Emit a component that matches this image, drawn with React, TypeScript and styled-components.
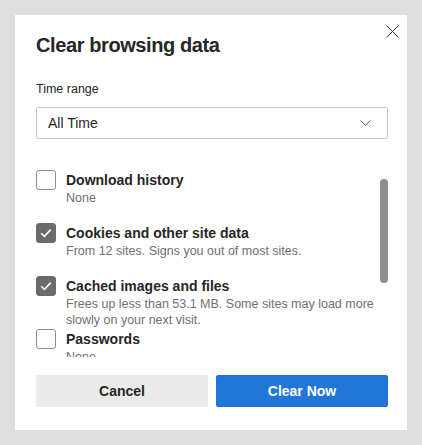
import React from "react";
import styled, { createGlobalStyle } from "styled-components";

const GlobalStyle = createGlobalStyle`
  html, body {
    margin: 0;
    padding: 0;
    background: #dedede;
  }
  body {
    font-family: "Liberation Sans", Arial, sans-serif;
    color: #262626;
  }
`;

const Page = styled.div`
  width: 422px;
  height: 445px;
  padding: 15px;
  box-sizing: border-box;
`;

const Dialog = styled.section`
  position: relative;
  width: 392px;
  height: 415px;
  box-sizing: border-box;
  background: #fff;
  padding: 18px 19px 23px 21px;
  display: flex;
  flex-direction: column;
`;

const CloseButton = styled.button`
  position: absolute;
  top: 6px;
  right: 5px;
  width: 20px;
  height: 20px;
  padding: 0;
  border: none;
  background: none;
  display: flex;
  align-items: center;
  justify-content: center;
  cursor: pointer;
`;

const Title = styled.h1`
  margin: 0;
  font-size: 20px;
  line-height: 24px;
  font-weight: 700;
  letter-spacing: -0.4px;
  color: #262626;
`;

const FieldLabel = styled.div`
  margin-top: 24px;
  font-size: 12.5px;
  line-height: 16px;
  color: #262626;
`;

const Select = styled.div`
  margin-top: 10px;
  height: 32px;
  box-sizing: border-box;
  border: 1px solid #c6c6c6;
  border-radius: 2px;
  display: flex;
  align-items: center;
  justify-content: space-between;
  padding: 0 16px 0 11px;
  font-size: 14px;
  color: #262626;
`;

const ListArea = styled.div`
  margin-top: 16px;
  height: 202px;
  display: flex;
  overflow: hidden;
`;

const List = styled.div`
  flex: 1;
  padding-top: 15px;
  display: flex;
  flex-direction: column;
  gap: 5px;
`;

const Track = styled.div`
  width: 8px;
  padding-top: 24px;
`;

const Thumb = styled.div`
  height: 104px;
  border-radius: 4px;
  background: #8c8c8c;
`;

const Item = styled.div`
  display: flex;
  gap: 10px;
  min-height: 48px;
`;

const Box = styled.div<{ $checked?: boolean }>`
  flex: none;
  width: 20px;
  height: 20px;
  box-sizing: border-box;
  border-radius: 3px;
  border: 1px solid ${(p) => (p.$checked ? "#6b6b6b" : "#8c8c8c")};
  background: ${(p) => (p.$checked ? "#6b6b6b" : "#fff")};
  display: flex;
  align-items: center;
  justify-content: center;
`;

const ItemText = styled.div`
  display: flex;
  flex-direction: column;
  padding-right: 6px;
`;

const ItemTitle = styled.div`
  font-size: 14px;
  line-height: 20px;
  font-weight: 700;
  color: #262626;
`;

const ItemDesc = styled.div`
  font-size: 12.5px;
  line-height: 16px;
  color: #707070;
`;

const Actions = styled.div`
  margin-top: 18px;
  display: grid;
  grid-template-columns: 1fr 1fr;
  gap: 8px;
`;

const Button = styled.button<{ $primary?: boolean }>`
  height: 32px;
  border: none;
  border-radius: 2px;
  font-family: "Liberation Sans", Arial, sans-serif;
  font-size: 14px;
  font-weight: 700;
  background: ${(p) => (p.$primary ? "#2176d6" : "#ebebeb")};
  color: ${(p) => (p.$primary ? "#fff" : "#262626")};
  cursor: pointer;
`;

const items = [
  { title: "Download history", desc: "None", checked: false },
  {
    title: "Cookies and other site data",
    desc: "From 12 sites. Signs you out of most sites.",
    checked: true,
  },
  {
    title: "Cached images and files",
    desc: "Frees up less than 53.1 MB. Some sites may load more slowly on your next visit.",
    checked: true,
  },
  { title: "Passwords", desc: "None", checked: false },
];

const Check = () => (
  <svg width="12" height="10" viewBox="0 0 12 10">
    <path d="M1.2 5.2 L4.4 8.3 L10.8 1.6" fill="none" stroke="#fff" strokeWidth="1.6" />
  </svg>
);

export default function App() {
  return (
    <>
      <GlobalStyle />
      <Page>
        <Dialog>
          <CloseButton aria-label="Close">
            <svg width="13" height="13" viewBox="0 0 13 13">
              <path d="M0.5 0.5 L12.5 12.5 M12.5 0.5 L0.5 12.5" stroke="#333" strokeWidth="1" />
            </svg>
          </CloseButton>
          <Title>Clear browsing data</Title>
          <FieldLabel>Time range</FieldLabel>
          <Select>
            <span>All Time</span>
            <svg width="11" height="6" viewBox="0 0 11 6">
              <path d="M0.5 0.5 L5.5 5.3 L10.5 0.5" fill="none" stroke="#555" strokeWidth="1" />
            </svg>
          </Select>
          <ListArea>
            <List>
              {items.map((it) => (
                <Item key={it.title}>
                  <Box $checked={it.checked}>{it.checked && <Check />}</Box>
                  <ItemText>
                    <ItemTitle>{it.title}</ItemTitle>
                    <ItemDesc>{it.desc}</ItemDesc>
                  </ItemText>
                </Item>
              ))}
            </List>
            <Track>
              <Thumb />
            </Track>
          </ListArea>
          <Actions>
            <Button>Cancel</Button>
            <Button $primary>Clear Now</Button>
          </Actions>
        </Dialog>
      </Page>
    </>
  );
}
